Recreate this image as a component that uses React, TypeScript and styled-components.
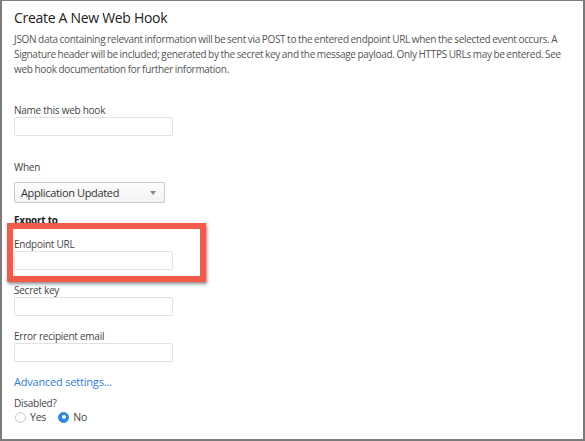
import React from "react";
import styled, { createGlobalStyle } from "styled-components";

const GlobalStyle = createGlobalStyle`
  html, body { margin: 0; padding: 0; background: #ffffff; }
  body { font-family: "Open Sans", "Noto Sans", sans-serif; }
  * { box-sizing: border-box; }
`;

const Frame = styled.div`
  width: 585px;
  height: 441px;
  border: 2px solid #7b7b7b;
  border-top-width: 1px;
  background: #ffffff;
  padding: 7px 10px 0 12px;
  display: flex;
  flex-direction: column;
  overflow: hidden;
`;

const Title = styled.h2`
  margin: 0;
  font-size: 14px;
  letter-spacing: -0.3px;
  line-height: 20px;
  font-weight: 400;
  color: #222;
`;

const Description = styled.p`
  margin: 4px 0 0 0;
  font-size: 10px;
  letter-spacing: -0.3px;
  word-spacing: -0.5px;
  line-height: 15px;
  color: #555;
`;

const Form = styled.div`
  display: flex;
  flex-direction: column;
  margin-top: 26px;
`;

const FieldBox = styled.div<{ $gap?: number }>`
  position: relative;
  display: flex;
  flex-direction: column;
  margin-top: ${(p) => p.$gap ?? 13}px;
`;

const Label = styled.label`
  font-size: 10px;
  letter-spacing: -0.25px;
  line-height: 14px;
  color: #444;
`;

const TextInput = styled.input`
  width: 159px;
  height: 19px;
  margin: 0;
  border: 1px solid #e2e2e2;
  border-radius: 2px;
  background: #fff;
  padding: 0 4px;
  font: inherit;
`;

const SelectBox = styled.div`
  margin-top: 8px;
  width: 151px;
  height: 21px;
  border: 1px solid #c9c9c9;
  border-radius: 2px;
  background: linear-gradient(#fdfdfd, #f3f3f3);
  display: flex;
  align-items: center;
  justify-content: space-between;
  padding: 0 8px 0 6px;
  font-size: 11px;
  letter-spacing: -0.35px;
  color: #333;
`;

const Caret = styled.span`
  width: 0;
  height: 0;
  border-left: 3px solid transparent;
  border-right: 3px solid transparent;
  border-top: 4px solid #888;
`;

const SectionHeading = styled.div`
  margin-top: 10px;
  font-size: 10px;
  letter-spacing: -0.25px;
  line-height: 14px;
  font-weight: 700;
  color: #222;
`;

const Annotation = styled.div`
  position: absolute;
  left: -7px;
  top: -14px;
  width: 199px;
  height: 59px;
  border: 6px solid #f25a4a;
  box-shadow: 1px 2px 3px rgba(0, 0, 0, 0.45);
  pointer-events: none;
`;

const Link = styled.a`
  margin-top: 12px;
  font-size: 11px;
  letter-spacing: -0.2px;
  line-height: 16px;
  color: #2f7bd4;
  text-decoration: none;
`;

const RadioGroup = styled.div`
  display: flex;
  align-items: center;
  gap: 11px;
  margin-top: -1px;
`;

const RadioOption = styled.label`
  display: flex;
  align-items: center;
  gap: 4px;
  font-size: 10.5px;
  letter-spacing: -0.2px;
  line-height: 16px;
  color: #444;
`;

const RadioDot = styled.span<{ $checked?: boolean }>`
  width: 11px;
  height: 11px;
  border-radius: 50%;
  margin-left: 1px;
  border: 1px solid ${(p) => (p.$checked ? "#2f86e3" : "#c8c8c8")};
  background: ${(p) => (p.$checked ? "#2f86e3" : "#fff")};
  display: flex;
  align-items: center;
  justify-content: center;
  &::after {
    content: "";
    width: 4px;
    height: 4px;
    border-radius: 50%;
    background: #fff;
    display: ${(p) => (p.$checked ? "block" : "none")};
  }
`;

type FieldProps = { label: string; gap?: number; highlighted?: boolean };

function Field({ label, gap, highlighted }: FieldProps) {
  return (
    <FieldBox $gap={gap}>
      <Label>{label}</Label>
      <TextInput type="text" />
      {highlighted && <Annotation />}
    </FieldBox>
  );
}

export default function App() {
  return (
    <>
      <GlobalStyle />
      <Frame>
        <Title>Create A New Web Hook</Title>
        <Description>
          JSON data containing relevant information will be sent via POST to the entered endpoint URL when the selected
          event occurs. A Signature header will be included; generated by the secret key and the message payload. Only
          HTTPS URLs may be entered. See web hook documentation for further information.
        </Description>
        <Form>
          <Field label="Name this web hook" gap={0} />
          <FieldBox $gap={24}>
            <Label>When</Label>
            <SelectBox>
              <span>Application Updated</span>
              <Caret />
            </SelectBox>
          </FieldBox>
          <SectionHeading>Export to</SectionHeading>
          <Field label="Endpoint URL" gap={10} highlighted />
          <Field label="Secret key" />
          <Field label="Error recipient email" />
          <Link href="#">Advanced settings...</Link>
          <FieldBox $gap={6}>
            <Label>Disabled?</Label>
            <RadioGroup>
              <RadioOption>
                <RadioDot />
                Yes
              </RadioOption>
              <RadioOption>
                <RadioDot $checked />
                No
              </RadioOption>
            </RadioGroup>
          </FieldBox>
        </Form>
      </Frame>
    </>
  );
}
